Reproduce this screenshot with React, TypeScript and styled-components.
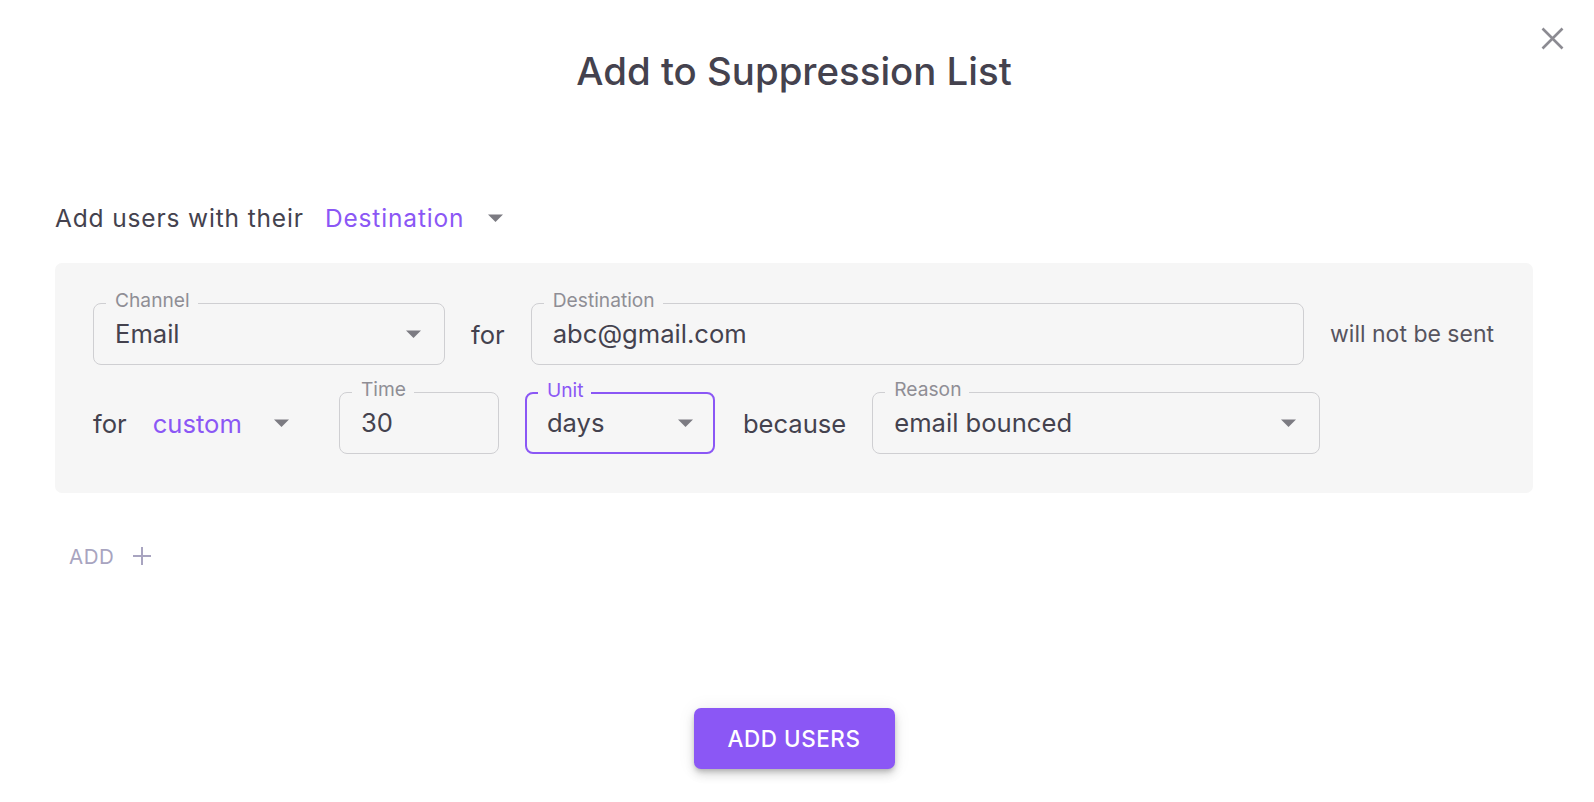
import React from 'react';
import styled, { createGlobalStyle } from 'styled-components';

const PURPLE = '#8b57f5';
const TEXT = '#44424e';
const LABEL = '#8f8e95';
const BORDER = '#cfcfd2';

const Global = createGlobalStyle`
  html, body { margin: 0; padding: 0; background: #fff; }
  body { font-family: Inter, "Noto Sans", sans-serif; color: ${TEXT}; }
  * { box-sizing: border-box; }
`;

const Dialog = styled.div`
  position: relative;
  width: 1594px;
  height: 802px;
  padding: 48px 61px 0 55px;
  display: flex;
  flex-direction: column;
  background: #fff;
`;

const Title = styled.h2`
  margin: 0;
  text-align: center;
  font-size: 38.4px;
  line-height: 46px;
  font-weight: 500;
  color: ${TEXT};
`;

const CloseButton = styled.button`
  position: absolute;
  top: 26px;
  right: 30px;
  width: 24px;
  height: 24px;
  padding: 0;
  border: 0;
  background: transparent;
  display: flex;
  align-items: center;
  justify-content: center;
  cursor: pointer;
`;

const IntroRow = styled.div`
  margin-top: 104px;
  height: 40px;
  display: flex;
  align-items: center;
  font-size: 24.5px;
  letter-spacing: 0.85px;
  line-height: 40px;
  color: ${TEXT};
`;

const InlineSelect = styled.div<{ $gap: number; $tail: number; $lead?: number }>`
  display: flex;
  align-items: center;
  color: ${PURPLE};
  gap: ${p => p.$gap}px;
  margin-left: ${p => p.$lead ?? 0}px;
  padding-right: ${p => p.$tail}px;
`;

const Panel = styled.div`
  margin-top: 25px;
  background: #f6f6f6;
  border-radius: 7px;
  padding: 30px 39px 39px 38px;
  display: flex;
  flex-direction: column;
  gap: 17px;
`;

const Row = styled.div`
  display: flex;
  align-items: flex-end;
  gap: 26px;
`;

const Word = styled.span<{ $size?: number; $color?: string; $lead?: number }>`
  height: 62px;
  display: flex;
  align-items: center;
  white-space: nowrap;
  margin-left: ${p => p.$lead ?? 0}px;
  font-size: ${p => p.$size ?? 25.6}px;
  color: ${p => p.$color ?? TEXT};
`;

const Field = styled.fieldset<{ $w?: number; $grow?: boolean; $focused?: boolean }>`
  margin: 0;
  padding: 0;
  min-width: 0;
  width: ${p => (p.$w ? `${p.$w}px` : 'auto')};
  flex: ${p => (p.$grow ? '1 1 0' : '0 0 auto')};
  border: ${p => (p.$focused ? `2px solid ${PURPLE}` : `1px solid ${BORDER}`)};
  border-radius: 8px;
`;

const Legend = styled.legend<{ $focused?: boolean }>`
  margin-left: ${p => (p.$focused ? 11 : 12)}px;
  padding: 0 8px 6px 9px;
  font-size: 19.2px;
  line-height: ${p => (p.$focused ? 14 : 15)}px;
  color: ${p => (p.$focused ? PURPLE : LABEL)};
`;

const FieldBody = styled.div<{ $focused?: boolean }>`
  display: flex;
  align-items: center;
  justify-content: space-between;
  height: ${p => (p.$focused ? 49 : 50)}px;
  padding: 0 ${p => (p.$focused ? 20 : 23)}px ${p => (p.$focused ? 9 : 10)}px
    ${p => (p.$focused ? 20 : 21)}px;
`;

const Value = styled.span`
  font-size: 25.6px;
  line-height: 40px;
  color: ${TEXT};
  white-space: nowrap;
`;

const AddLink = styled.button`
  margin-top: 48px;
  align-self: flex-start;
  height: 30px;
  padding: 0 0 0 14px;
  border: 0;
  background: transparent;
  display: flex;
  align-items: center;
  gap: 19px;
  font-family: inherit;
  font-size: 20.5px;
  letter-spacing: 0.5px;
  color: #a8a4c0;
  text-transform: uppercase;
  cursor: pointer;
`;

const Footer = styled.div`
  margin-top: 137px;
  display: flex;
  justify-content: center;
`;

const PrimaryButton = styled.button`
  width: 201px;
  height: 61px;
  border: 0;
  border-radius: 7px;
  background: ${PURPLE};
  color: #fff;
  font-family: inherit;
  font-size: 22.4px;
  font-weight: 500;
  letter-spacing: 0.6px;
  text-transform: uppercase;
  box-shadow: 0 3px 5px -1px rgba(0, 0, 0, 0.2), 0 6px 10px 0 rgba(0, 0, 0, 0.12),
    0 1px 18px 0 rgba(0, 0, 0, 0.08);
  cursor: pointer;
`;

const Caret = () => (
  <svg width="15" height="8" viewBox="0 0 15 8" aria-hidden>
    <path d="M0 0.5 L15 0.5 L7.5 8 Z" fill="#7c7b82" />
  </svg>
);

const CloseIcon = () => (
  <svg width="23" height="23" viewBox="0 0 23 23" aria-hidden>
    <path d="M1.5 1.5 L21.5 21.5 M21.5 1.5 L1.5 21.5" stroke="#8c8b92" strokeWidth="2.6" />
  </svg>
);

const PlusIcon = () => (
  <svg width="18" height="18" viewBox="0 0 18 18" aria-hidden>
    <path d="M9 0 V18 M0 9 H18" stroke="#a8a4c0" strokeWidth="2" />
  </svg>
);

type SelectFieldProps = {
  label: string;
  value: string;
  width?: number;
  grow?: boolean;
  focused?: boolean;
  caret?: boolean;
};

const SelectField = ({ label, value, width, grow, focused, caret = true }: SelectFieldProps) => (
  <Field $w={width} $grow={grow} $focused={focused}>
    <Legend $focused={focused}>{label}</Legend>
    <FieldBody $focused={focused}>
      <Value>{value}</Value>
      {caret && <Caret />}
    </FieldBody>
  </Field>
);

export default function App() {
  return (
    <>
      <Global />
      <Dialog>
        <CloseButton aria-label="close">
          <CloseIcon />
        </CloseButton>
        <Title>Add to Suppression List</Title>

        <IntroRow>
          <span>Add users with their</span>
          <InlineSelect $gap={24} $tail={0} $lead={21}>
            <span>Destination</span>
            <Caret />
          </InlineSelect>
        </IntroRow>

        <Panel>
          <Row>
            <SelectField label="Channel" value="Email" width={352} />
            <Word>for</Word>
            <SelectField label="Destination" value="abc@gmail.com" grow caret={false} />
            <Word $size={23} $color="#56545e">will not be sent</Word>
          </Row>
          <Row>
            <Word>for</Word>
            <Word>
              <InlineSelect $gap={32} $tail={24}>
                <span>custom</span>
                <Caret />
              </InlineSelect>
            </Word>
            <SelectField label="Time" value="30" width={160} caret={false} />
            <SelectField label="Unit" value="days" width={190} focused />
            <Word $lead={2}>because</Word>
            <SelectField label="Reason" value="email bounced" width={448} />
          </Row>
        </Panel>

        <AddLink>
          <span>Add</span>
          <PlusIcon />
        </AddLink>

        <Footer>
          <PrimaryButton>Add users</PrimaryButton>
        </Footer>
      </Dialog>
    </>
  );
}
